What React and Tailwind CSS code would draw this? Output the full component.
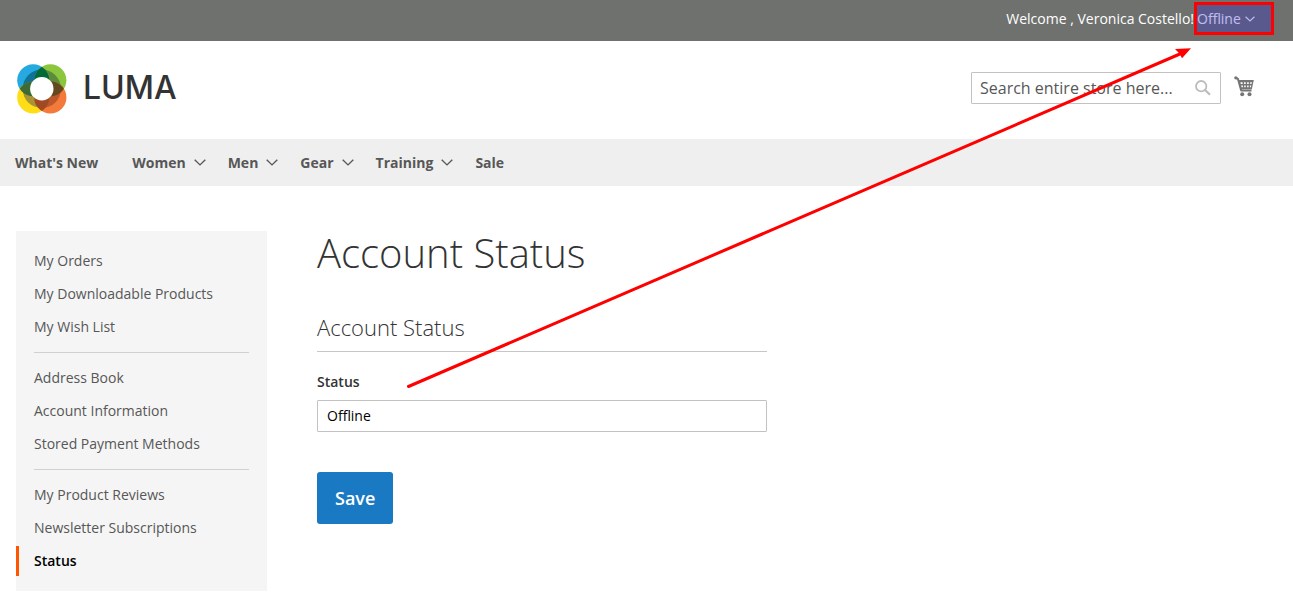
import React from "react";

const menu = [
  { label: "What's New" },
  { label: "Women", children: true },
  { label: "Men", children: true },
  { label: "Gear", children: true },
  { label: "Training", children: true },
  { label: "Sale" },
];

const accountGroups = [
  ["My Orders", "My Downloadable Products", "My Wish List"],
  ["Address Book", "Account Information", "Stored Payment Methods"],
  ["My Product Reviews", "Newsletter Subscriptions", "Status"],
];

function Chevron({ className }) {
  return (
    <svg viewBox="0 0 12 7" className={className} fill="none" stroke="currentColor" aria-hidden="true">
      <path d="M0.7 0.8 6 5.9l5.3-5.1" strokeWidth="1.4" />
    </svg>
  );
}

function LogoMark() {
  return (
    <svg viewBox="0 0 50 50" className="size-[50px]" aria-hidden="true">
      <defs>
        <clipPath id="tl"><circle cx="16.2" cy="16.2" r="16" /></clipPath>
        <clipPath id="tr"><circle cx="33.4" cy="16.2" r="16" /></clipPath>
        <clipPath id="bl"><circle cx="16.2" cy="33.4" r="16" /></clipPath>
        <clipPath id="br"><circle cx="33.4" cy="33.4" r="16" /></clipPath>
      </defs>
      <circle cx="16.2" cy="16.2" r="16" fill="#26a9e0" />
      <circle cx="33.4" cy="16.2" r="16" fill="#8cc63f" />
      <circle cx="16.2" cy="33.4" r="16" fill="#ffde17" />
      <circle cx="33.4" cy="33.4" r="16" fill="#f47a3c" />
      <circle cx="24.8" cy="24.8" r="19.2" fill="#0f7399" clipPath="url(#tl)" />
      <circle cx="24.8" cy="24.8" r="19.2" fill="#5b8c3c" clipPath="url(#tr)" />
      <circle cx="24.8" cy="24.8" r="19.2" fill="#a99435" clipPath="url(#bl)" />
      <circle cx="24.8" cy="24.8" r="19.2" fill="#bb592b" clipPath="url(#br)" />
      <g clipPath="url(#tl)">
        <circle cx="33.4" cy="16.2" r="16" fill="#006b38" />
        <circle cx="16.2" cy="33.4" r="16" fill="#3e6b35" />
      </g>
      <g clipPath="url(#br)">
        <circle cx="33.4" cy="16.2" r="16" fill="#65481f" />
        <circle cx="16.2" cy="33.4" r="16" fill="#a04a24" />
      </g>
      <circle cx="24.8" cy="24.8" r="11.7" fill="#fff" />
    </svg>
  );
}

function CartIcon() {
  return (
    <svg viewBox="0 0 20 21" className="h-[21px] w-5" fill="none" aria-hidden="true">
      <circle cx="1.8" cy="1.8" r="1.6" fill="#757575" />
      <path d="M1.6 1.7 4 3l3.2 11.6h10.3" stroke="#757575" strokeWidth="2" strokeLinejoin="round" />
      <path d="M4 4h15.8l-2 9.2H6.5z" fill="#757575" />
      <path d="M6.4 6.2h2.2v1.9H6.8zM10 6.2h1.7v1.9H10zM13.1 6.2h1.7v1.9h-1.7zM16.2 6.2h1.8l-.5 1.9h-1.3zM7.2 9.4h1.7v1.8H7.6zM10.2 9.4h1.5v1.8h-1.5zM13.1 9.4h1.5v1.8h-1.5zM15.9 9.4h1.4l-.4 1.8h-1z" fill="#fff" />
      <circle cx="8.2" cy="18.2" r="2" fill="#757575" />
      <circle cx="15.5" cy="18.2" r="2" fill="#757575" />
    </svg>
  );
}

export default function App() {
  return (
    <div className="relative min-h-screen bg-white font-['Open_Sans','Noto_Sans',sans-serif] text-sm text-[#333333]">
      <div className="flex h-[41px] items-start justify-end bg-[#6e716e] pr-[19px] text-white">
        <span className="pt-2 leading-[22px]">Welcome , Veronica Costello!</span>
        <button type="button" className="relative mt-[2px] flex h-[33px] w-20 items-center gap-1 pl-[3px] text-left">
          Offline
          <Chevron className="h-[6px] w-[10px]" />
          <span className="pointer-events-none absolute inset-0 border-[3px] border-[#ff0000] bg-[#2a20d8]/30 bg-clip-padding" />
        </button>
      </div>

      <header className="flex h-[98px] items-center justify-between pb-[2px] pl-[17px] pr-[39px]">
        <a href="#" className="flex items-center gap-4">
          <LogoMark />
          <span className="pb-[2px] font-['Inter',sans-serif] text-[32px] font-medium leading-none">LUMA</span>
        </a>
        <div className="flex items-center gap-[13px] pb-[6px]">
          <form className="mt-1 flex h-8 w-[250px] items-center rounded-[1px] border border-[#c2c2c2] bg-white pl-2 pr-[9px]">
            <input
              type="text"
              aria-label="Search"
              placeholder="Search entire store here..."
              className="min-w-0 flex-1 text-base outline-none placeholder:text-[#575757]"
            />
            <button type="button" aria-label="Search">
              <svg viewBox="0 0 16 16" className="size-4" fill="none" stroke="#bcbcbc" aria-hidden="true">
                <circle cx="6.2" cy="6.2" r="5.2" strokeWidth="1.8" />
                <path d="m10 10 5 4.8" strokeWidth="2.2" />
              </svg>
            </button>
          </form>
          <a href="#" aria-label="My Cart">
            <CartIcon />
          </a>
        </div>
      </header>

      <nav className="bg-[#efefef]">
        <ul className="flex h-[47px] items-center gap-[22px] pl-[15px] font-bold text-[#575757]">
          {menu.map((item) => (
            <li key={item.label} className="first:pr-3">
              <a href="#" className="flex items-center gap-2">
                {item.label}
                {item.children && <Chevron className="h-[7px] w-3" />}
              </a>
            </li>
          ))}
        </ul>
      </nav>

      <div className="flex items-start gap-[50px] px-4 pt-[45px]">
        <aside className="w-[251px] shrink-0 bg-[#f5f5f5] py-[15px]">
          {accountGroups.map((group, i) => (
            <React.Fragment key={group[0]}>
              {i > 0 && <hr className="mx-[18px] my-[10px] border-[#d1d1d1]" />}
              <ul className="flex flex-col gap-[3px]">
                {group.map((label) => (
                  <li key={label}>
                    <a
                      href="#"
                      className={
                        label === "Status"
                          ? "block border-l-[3px] border-[#ff5501] pl-[15px] font-semibold leading-[30px] text-black"
                          : "block border-l-[3px] border-transparent pl-[15px] leading-[30px] text-[#575757]"
                      }
                    >
                      {label}
                    </a>
                  </li>
                ))}
              </ul>
            </React.Fragment>
          ))}
        </aside>

        <main className="min-w-0 flex-1">
          <h1 className="text-[40px] font-light leading-[44px]">Account Status</h1>
          <form className="mt-[38px] max-w-[450px]">
            <h2 className="border-b border-[#c6c6c6] pb-[10px] text-[22px] font-light leading-7">Account Status</h2>
            <label htmlFor="status" className="mt-5 block font-semibold leading-5">
              Status
            </label>
            <input
              id="status"
              type="text"
              defaultValue="Offline"
              className="mt-2 block h-8 w-full rounded-[1px] border border-[#c2c2c2] bg-white px-[9px] pb-[2px] text-black outline-none"
            />
            <button type="button" className="mt-10 h-[52px] rounded-[3px] bg-[#1979c3] px-[18px] text-lg font-semibold text-white">
              Save
            </button>
          </form>
        </main>
      </div>

      <svg viewBox="0 0 784 340" className="pointer-events-none absolute right-[102px] top-12 h-[340px] w-[784px]" aria-hidden="true">
        <path d="M1.500 338.500 774 5.500" stroke="#ff0000" strokeWidth="3" strokeLinecap="round" />
        <path d="M784 0.300 768 1 772.500 5.500 775 10.200z" fill="#ff0000" />
      </svg>
    </div>
  );
}
